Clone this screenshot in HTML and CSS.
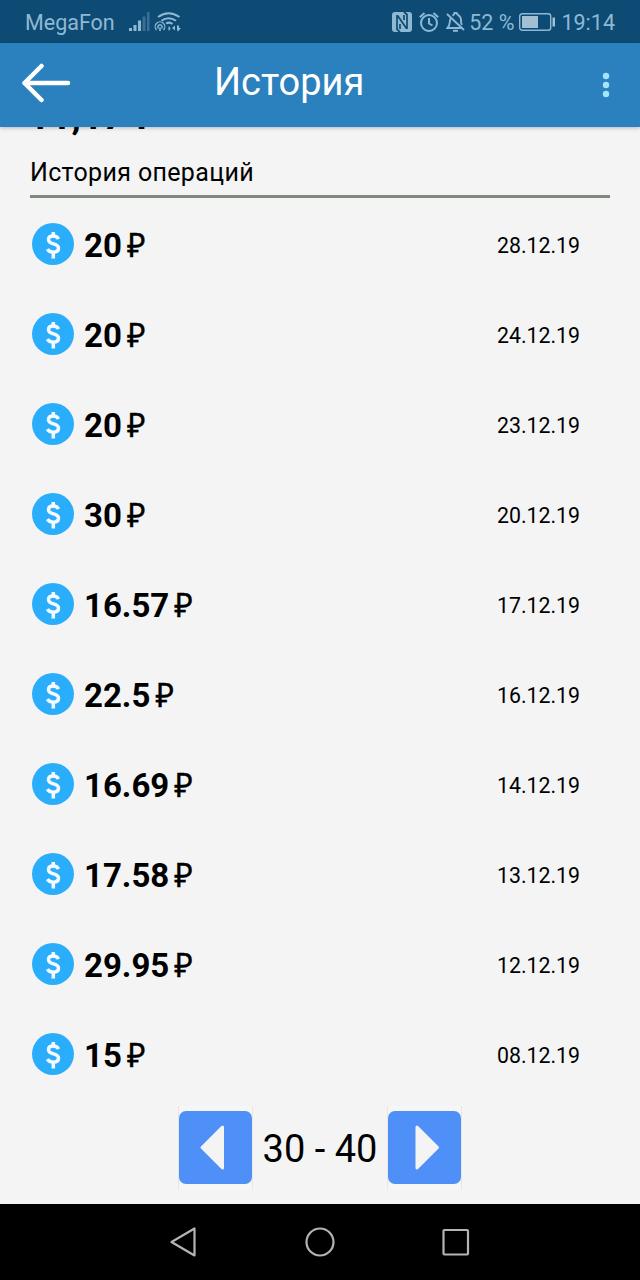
FILE: index.html
```html
<!DOCTYPE html>
<html lang="ru">
<head>
    <meta charset="UTF-8">
    <meta name="viewport" content="width=device-width, initial-scale=1.0">
    <title>История</title>
    <link rel="stylesheet" href="styles.css">
</head>
<body>

    <!-- Shared icon for the operation rows -->
    <svg class="defs" width="0" height="0">
        <symbol id="coin" viewBox="0 0 42 42">
            <circle cx="21" cy="21" r="21" fill="#2aaefc"/>
            <path d="M26.500 16c-1-2-2.800-3-5.200-3-3 0-4.800 1.400-4.800 3.700 0 5.200 10 3.200 10 8.300 0 2.700-2.200 4.200-5.300 4.200-2.600 0-4.600-1-5.800-3M21.300 9v4.500M21.300 29v6.500" fill="none" stroke="#f4faff" stroke-width="3.500"/>
        </symbol>
    </svg>

    <div class="status-bar">
        <span class="carrier">MegaFon</span>
        <svg class="signal" width="22" height="20" viewBox="0 0 22 20">
            <path d="M1 16h3v3H1zM5.500 13h3v6h-3zM10 8.500h3V19h-3z" fill="#8fb9d3"/>
            <path d="M14.500 4.500h3V19h-3zM19 0h2.500v19H19z" fill="#3a7096"/>
        </svg>
        <svg class="wifi" width="28" height="20" viewBox="0 0 28 20">
            <g fill="none" stroke="#8fb9d3" stroke-width="2">
                <path d="M4 5Q14.500-2.500 25.500 5M7.500 8.800Q14.500 3.500 22 8.800M12 11.500Q15.500 9.500 18.500 12"/>
                <path d="M2.500 18a4.800 4.800 0 1 1 7 0M4.500 16.500a2.100 2.100 0 1 1 3 0" stroke-width="1.300"/>
            </g>
            <path d="M14.500 14.500a2 2 0 1 1-.1 4zM18 16l3-2.500v5zM23 13.500h2V16h2l-3 3.500-1-1.500zM5.200 15.500h1.600V19H5.200z" fill="#8fb9d3"/>
        </svg>
        <div class="status-right">
            <svg width="20" height="20" viewBox="0 0 20 20">
                <rect width="20" height="20" rx="3" fill="#8fb9d3"/>
                <path d="M5 3v14.500l3 2.500M15 17V2.500L12 0M5.500 3.500L14.500 16.500M8 12v5M12 3v5" fill="none" stroke="#0d4b75" stroke-width="1.700"/>
            </svg>
            <svg class="alarm" width="20" height="20" viewBox="0 0 20 20" fill="none" stroke="#8fb9d3" stroke-width="2">
                <circle cx="10" cy="11" r="8"/>
                <path d="M10 6v5.500l3.500 2M.8 5.200L5.500 1M14.500 1l4.700 4.200"/>
            </svg>
            <svg class="bell" width="19" height="20" viewBox="0 0 19 20" fill="none" stroke="#8fb9d3" stroke-width="1.900">
                <path d="M1 2l17 16M4.500 6.500C3.500 9 4.500 13 1.500 16H15M6.500 3.700c1-.8 2-1 2-2.700h2c0 1.700 4.500 2.200 4.500 7 0 2 .2 3.500.8 5"/>
                <path d="M7 18.800h5" stroke-width="2"/>
            </svg>
            <span>52 %</span>
            <svg class="battery" width="36" height="18" viewBox="0 0 36 18">
                <rect x=".7" y=".7" width="31" height="16.600" rx="2.500" fill="none" stroke="#8fb9d3" stroke-width="1.400"/>
                <path d="M3 3h16v12H3zM33.500 4.500h2.500v9h-2.500z" fill="#a3c0d3"/>
            </svg>
            <span>19:14</span>
        </div>
    </div>

    <div class="header">
        <svg width="50" height="40" viewBox="0 0 50 40" fill="none" stroke="#fff" stroke-width="4.500" stroke-linecap="round" stroke-linejoin="round">
            <path d="M47 20H3.500M20.500 3l-17 17 17 17"/>
        </svg>
        <h1>История</h1>
        <svg class="menu" width="8" height="26" viewBox="0 0 8 26" fill="#a6e3ff">
            <circle cx="4" cy="4" r="3.200"/>
            <circle cx="4" cy="13" r="3.200"/>
            <circle cx="4" cy="22" r="3.200"/>
        </svg>
    </div>

    <div class="content">
        <div class="balance">11,17 ₽</div>
        <h2>История операций</h2>

        <ul class="operations">
            <li><svg class="coin"><use href="#coin"/></svg><b>20</b><span class="rub">₽</span><span class="date">28.12.19</span></li>
            <li><svg class="coin"><use href="#coin"/></svg><b>20</b><span class="rub">₽</span><span class="date">24.12.19</span></li>
            <li><svg class="coin"><use href="#coin"/></svg><b>20</b><span class="rub">₽</span><span class="date">23.12.19</span></li>
            <li><svg class="coin"><use href="#coin"/></svg><b>30</b><span class="rub">₽</span><span class="date">20.12.19</span></li>
            <li><svg class="coin"><use href="#coin"/></svg><b>16.57</b><span class="rub">₽</span><span class="date">17.12.19</span></li>
            <li><svg class="coin"><use href="#coin"/></svg><b>22.5</b><span class="rub">₽</span><span class="date">16.12.19</span></li>
            <li><svg class="coin"><use href="#coin"/></svg><b>16.69</b><span class="rub">₽</span><span class="date">14.12.19</span></li>
            <li><svg class="coin"><use href="#coin"/></svg><b>17.58</b><span class="rub">₽</span><span class="date">13.12.19</span></li>
            <li><svg class="coin"><use href="#coin"/></svg><b>29.95</b><span class="rub">₽</span><span class="date">12.12.19</span></li>
            <li><svg class="coin"><use href="#coin"/></svg><b>15</b><span class="rub">₽</span><span class="date">08.12.19</span></li>
        </ul>

        <div class="pager">
            <a class="page-button">
                <svg width="73" height="73" viewBox="0 0 73 73"><rect width="73" height="73" rx="7"/><path d="M43.500 16v41L23 36.500z"/></svg>
            </a>
            <span>30 - 40</span>
            <a class="page-button">
                <svg width="73" height="73" viewBox="0 0 73 73"><rect width="73" height="73" rx="7"/><path d="M29 16v41l20.500-20.500z"/></svg>
            </a>
        </div>
    </div>

    <div class="nav-bar">
        <svg width="30" height="32" viewBox="0 0 30 32"><path d="M25.500 2.500v27L2.500 16z"/></svg>
        <svg width="32" height="32" viewBox="0 0 32 32"><circle cx="16" cy="16" r="13.500"/></svg>
        <svg width="30" height="32" viewBox="0 0 30 32"><rect x="2.500" y="4" width="24.500" height="24.500" rx="1"/></svg>
    </div>

</body>
</html>
```
FILE: styles.css
```css
* {
    box-sizing: border-box;
}
body {
    font-family: Roboto, sans-serif;
    margin: 0;
    height: 1280px;
    display: flex;
    flex-direction: column;
    background-color: #f4f4f4;
    color: #000;
    overflow: hidden;
}
svg {
    display: block;
    flex-shrink: 0;
}
.defs {
    display: none;
}
.status-bar {
    height: 43px;
    flex-shrink: 0;
    display: flex;
    align-items: center;
    padding: 1px 25px 0 25px;
    background-color: #0d4b75;
    color: #8fb9d3;
    font-size: 21.5px;
}
.signal {
    margin-left: 13px;
}
.wifi {
    margin-left: 4px;
}
.status-right {
    margin-left: auto;
    display: flex;
    align-items: center;
}
.alarm {
    margin-left: 7px;
}
.bell {
    margin: 0 4px 0 7px;
}
.battery {
    margin: 0 6px 0 5px;
}
.header {
    height: 84px;
    flex-shrink: 0;
    display: flex;
    align-items: center;
    padding: 0 30px 4px 21px;
    background-color: #2b80be;
    color: #fff;
    box-shadow: 0 1px 4px rgba(0, 0, 0, 0.25);
    z-index: 1;
}
h1 {
    margin: 0 0 0 143px;
    font-size: 38px;
    font-weight: normal;
    line-height: 46px;
    padding-bottom: 2px;
}
.menu {
    margin: 4px 0 0 auto;
}
.content {
    flex: 1;
    min-height: 0;
    padding: 0 30px;
}
.balance {
    height: 25px;
    margin: -17px 0 0 -2px;
    font-size: 38px;
    font-weight: bold;
    line-height: 12px;
}
h2 {
    height: 63px;
    margin: 0;
    padding-top: 23px;
    border-bottom: 3px solid #7f877f;
    font-size: 25px;
    font-weight: normal;
    line-height: 30px;
    letter-spacing: 0.35px;
}
.operations {
    list-style: none;
    margin: 0;
    padding: 2px 30px 0 2px;
}
.operations li {
    display: flex;
    align-items: center;
    height: 90px;
}
.coin {
    width: 42px;
    height: 42px;
    margin-bottom: 2px;
}
.operations b {
    margin-left: 10px;
    font-size: 33px;
    line-height: 36px;
    padding-top: 2px;
}
.rub {
    margin-left: 5px;
    font-family: "Noto Sans", sans-serif;
    font-size: 32px;
    line-height: 36px;
    -webkit-text-stroke: 0.3px #000;
}
.date {
    margin-left: auto;
    font-size: 21.3px;
    padding-top: 1px;
}
.pager {
    display: flex;
    justify-content: center;
    align-items: center;
    margin-top: 6px;
    font-size: 38px;
    gap: 10px;
}
.pager span {
    padding-top: 1px;
}
.page-button {
    padding: 5px 0 6px;
    border: solid #e9e7e4;
    border-width: 0 1px;
    background-color: #f6f6f6;
    fill: #4e90f8;
}
.page-button path {
    fill: #f4f4f4;
    stroke: #f4f4f4;
    stroke-width: 3;
    stroke-linejoin: round;
}
.nav-bar {
    height: 76px;
    flex-shrink: 0;
    display: flex;
    align-items: center;
    justify-content: space-between;
    padding: 0 169px;
    background-color: #000;
}
.nav-bar svg {
    fill: none;
    stroke: #b4b4b4;
    stroke-width: 2.2;
    stroke-linejoin: round;
}
```
